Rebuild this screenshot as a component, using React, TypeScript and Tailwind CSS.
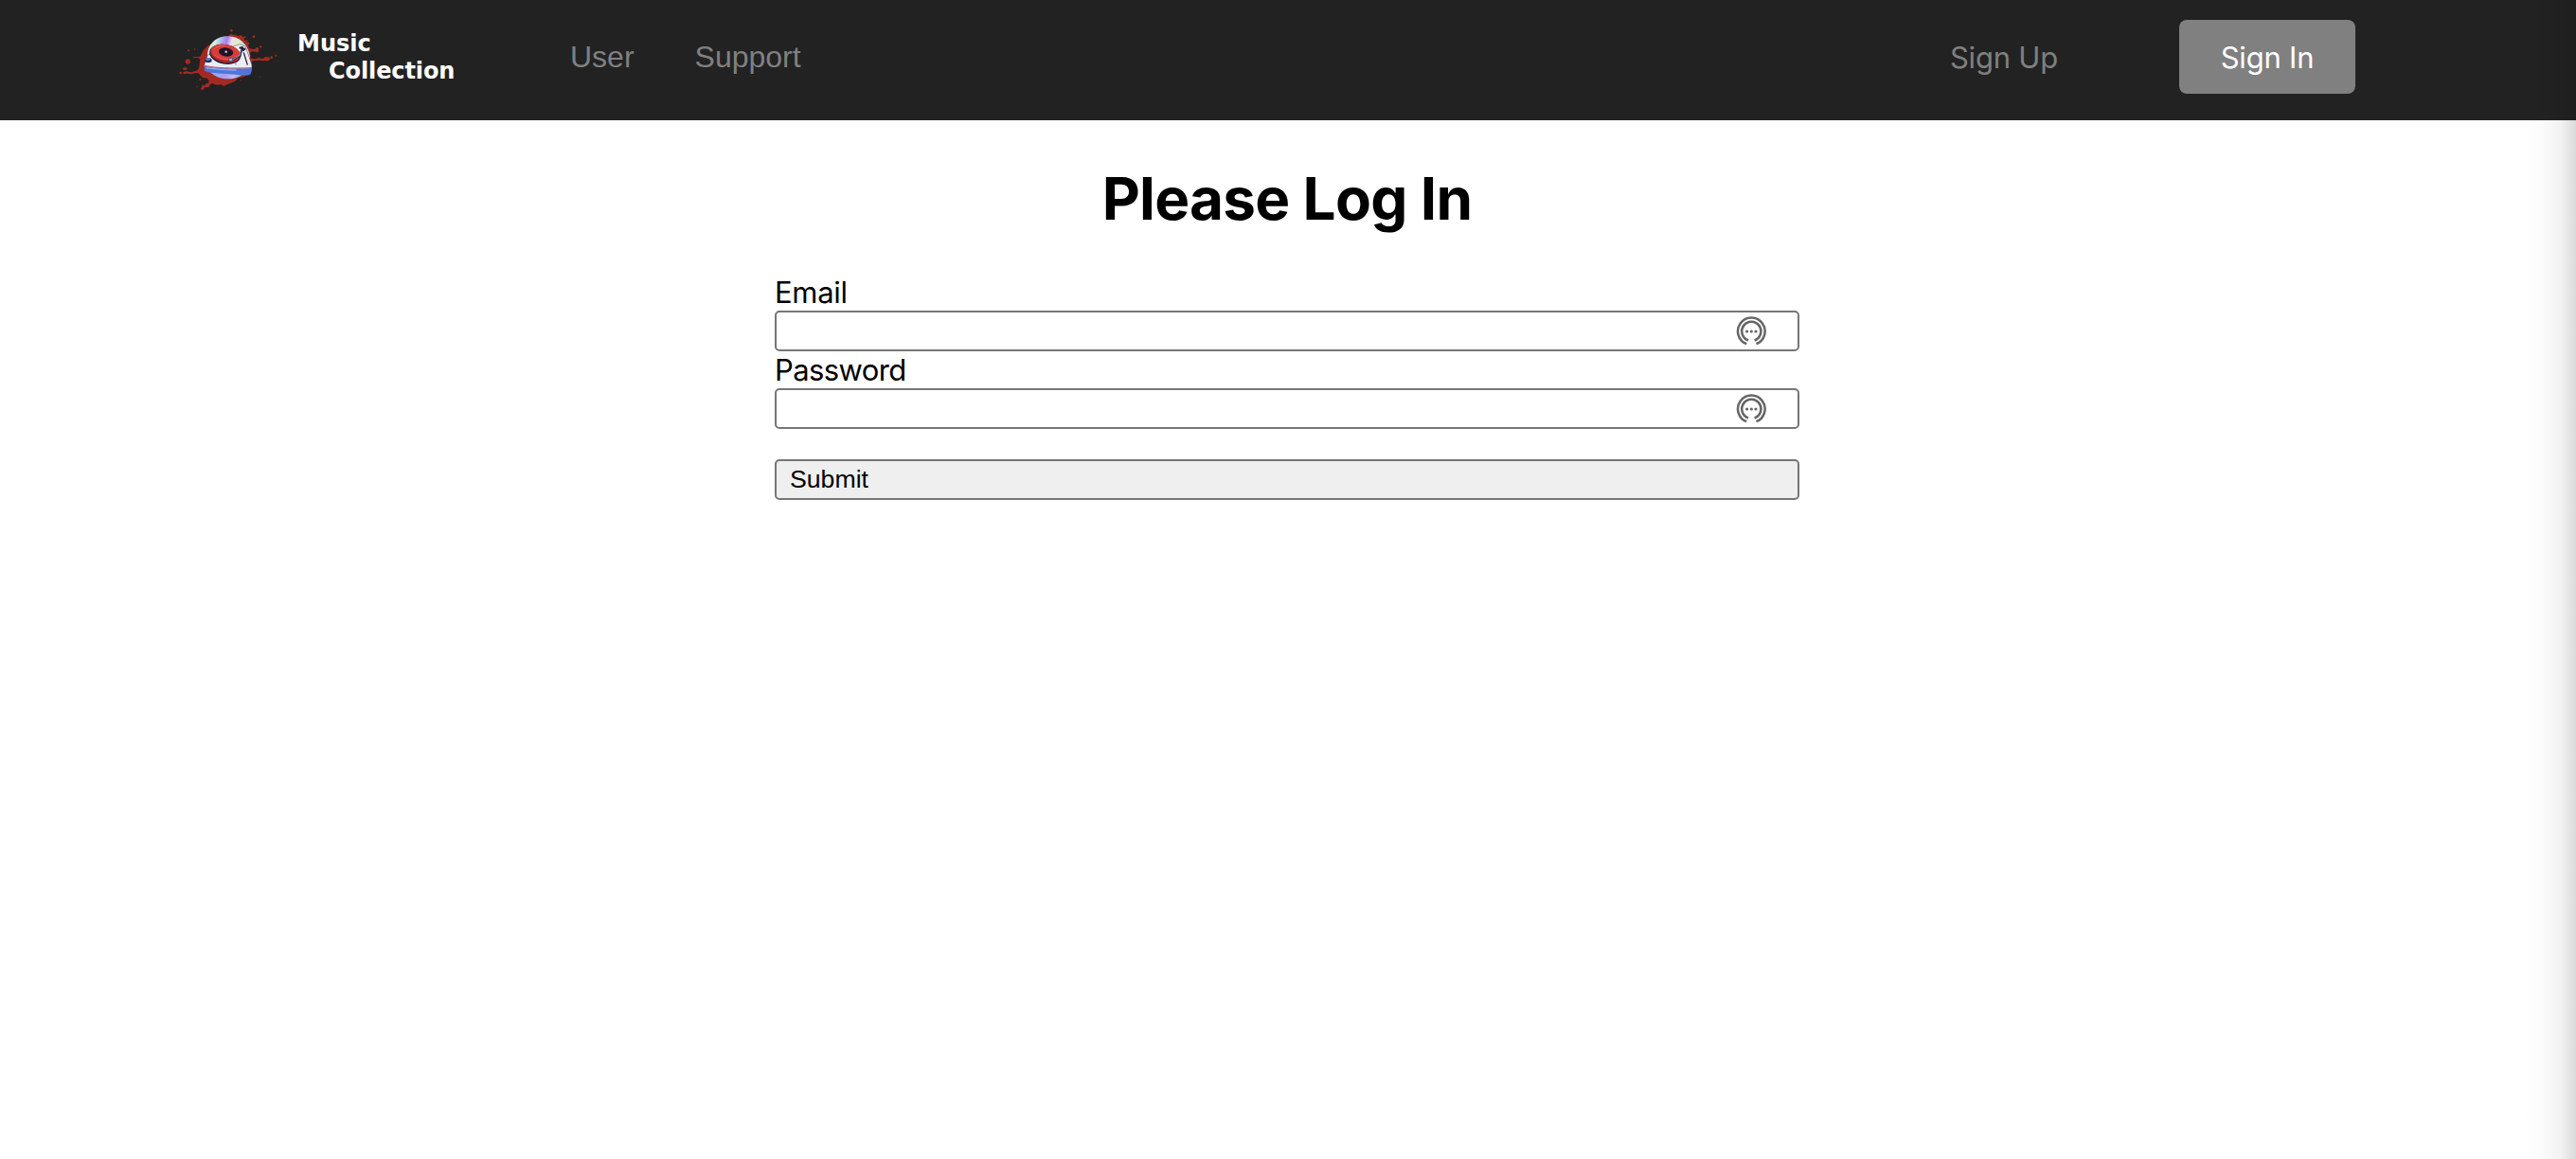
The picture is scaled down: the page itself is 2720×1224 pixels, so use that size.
import React from "react";

function Logo() {
  return (
    <svg width="120" height="80" viewBox="0 0 360 240" className="shrink-0" aria-hidden="true">
      <defs>
        <linearGradient id="disc" x1="0" y1="0.1" x2="1" y2="0.25">
          <stop offset="0" stopColor="#bfe3df" />
          <stop offset="0.2" stopColor="#d6f0dc" />
          <stop offset="0.34" stopColor="#a6b4ea" />
          <stop offset="0.46" stopColor="#a77ce8" />
          <stop offset="0.57" stopColor="#ecdcf4" />
          <stop offset="0.72" stopColor="#dcefc0" />
          <stop offset="0.86" stopColor="#b6e0d0" />
          <stop offset="1" stopColor="#d8dcf0" />
        </linearGradient>
        <linearGradient id="discLow" x1="0" y1="0" x2="1" y2="0">
          <stop offset="0" stopColor="#86b4ee" />
          <stop offset="0.45" stopColor="#a99df0" />
          <stop offset="0.7" stopColor="#b9c3f2" />
          <stop offset="1" stopColor="#6a8fe4" />
        </linearGradient>
      </defs>
      <g fill="#a32a22">
        <path d="M186 52l5-5 8 3 8 0 7 4 10-3 4 6 12-2-7 8 2 7 10-4-3 8 9 0-5 9 3 9 8 3 18 1 6 6-5 4-16-3-9 5 3 8-1 8 12 3 14-3 17 2 8-4 9 5-4 6-15 0-13-2-20 2-8 9 3 12-6 9-2 12-14 8-20 4-10 11-9 4-14 5-12 6-9-5-15 1-12-5-7 4-11 5-8 7-4 6-8-4 4-6 10-6 11-5 2-9-6-8-15-2-12-14-10 0-14 3-14-2-10 2-2-6 11-3 16 3 12-4 9-4 4-9 2-18 1-8-9-3-14 1 0-3 14-1 9-1 9-18 12-13 15-10 17-5z" />
        <circle cx="55" cy="135" r="8" />
        <circle cx="57" cy="100" r="3" />
        <circle cx="77" cy="96" r="2.5" />
        <circle cx="32" cy="171" r="4" />
        <ellipse cx="46" cy="158" rx="7" ry="4" />
        <circle cx="193" cy="37" r="4" />
        <circle cx="264" cy="56" r="4" />
        <circle cx="286" cy="88" r="3.5" />
        <circle cx="274" cy="96" r="6" />
        <ellipse cx="305" cy="126" rx="10" ry="6" />
        <circle cx="320" cy="122" r="4" />
        <circle cx="334" cy="116" r="3" />
        <circle cx="339" cy="133" r="1.5" />
        <circle cx="284" cy="184" r="1.5" />
        <circle cx="223" cy="195" r="2" />
        <circle cx="94" cy="192" r="3" />
        <circle cx="117" cy="210" r="7" />
        <circle cx="103" cy="213" r="4" />
        <circle cx="84" cy="215" r="2" />
      </g>
      <path d="M117 116C118 76 149 54 183 55c38 1 66 28 69 68l-30 10z" fill="url(#disc)" />
      <path d="M122 164c14 16 34 26 58 26 24 0 42-6 56-20z" fill="url(#discLow)" />
      <path d="M118 114l-10 29c-2 6-1 13 1 17 3 6 12 7 22 8l104 7c10 1 16-2 20-9 3-8 4-21 1-26l-18-52-18-8z" fill="#ececf5" stroke="#743344" strokeWidth="1.5" />
      <path d="M108 149c38 8 80 10 149 7 1 9-1 18-6 21-8 3-23 1-38 0l-82-7c-14-1-21-3-23-8z" fill="#4f75dc" />
      <path d="M108 148c40 8 82 9 149 7" stroke="#b73538" strokeWidth="2.5" fill="none" />
      <path d="M113 155c30 5 60 7 96 7" stroke="#88aef3" strokeWidth="4" fill="none" />
      <ellipse cx="173" cy="112" rx="50" ry="31" transform="rotate(10 173 112)" fill="#191a36" />
      <ellipse cx="174" cy="110" rx="48" ry="29" transform="rotate(10 174 110)" fill="#a92830" />
      <ellipse cx="174" cy="106" rx="46" ry="25" transform="rotate(10 174 106)" fill="#d83c35" />
      <path d="M136 98c5-9 22-15 38-13M139 113c13 13 37 18 55 12" stroke="#ee6755" strokeWidth="2.5" fill="none" />
      <ellipse cx="176" cy="105" rx="23" ry="14" transform="rotate(8 176 105)" fill="#211429" />
      <circle cx="176" cy="104" r="3.5" fill="#e6d7df" />
      <ellipse cx="120" cy="131" rx="11" ry="7" fill="#20294d" />
      <ellipse cx="119" cy="128" rx="8" ry="4" fill="#5483d4" />
      <path d="M218 91l20 5M226 87l6 15" stroke="#20203d" strokeWidth="6" />
      <path d="M226 96l-5 22-27 12" stroke="#22213b" strokeWidth="5" fill="none" strokeLinejoin="round" />
      <path d="M222 108l-4 9-24 13" stroke="#b9c6ec" strokeWidth="2" fill="none" />
      <path d="M184 126l10-3 4 8-10 5z" fill="#88b5ed" stroke="#20213d" strokeWidth="1.5" />
      <path d="M232 106l12 40" stroke="#29253d" strokeWidth="4" />
      <circle cx="207" cy="143" r="2" fill="#4b435f" />
    </svg>
  );
}

function VaultIcon() {
  return (
    <svg width="32" height="32" viewBox="0 0 32 32" fill="none" stroke="#666" strokeWidth="2.5" className="shrink-0 -translate-y-px" aria-hidden="true">
      <path d="M11.2 30.2A14.3 14.3 0 1 1 21.4 30.2" />
      <path d="M13 26.4A10.1 10.1 0 1 1 19.6 26.4" strokeWidth="2.6" />
      <g fill="#666" stroke="none">
        <circle cx="11.6" cy="17" r="1.6" />
        <circle cx="16.3" cy="17" r="1.6" />
        <circle cx="21" cy="17" r="1.6" />
      </g>
    </svg>
  );
}

function Field({ label, type, spacing }: { label: string; type: string; spacing: string }) {
  return (
    <label className="block h-[82px]">
      <span className={`block h-[39px] pt-px text-[31px] leading-[37px] ${spacing}`}>{label}</span>
      <span className="flex h-[43px] items-center rounded-[5px] border-2 border-[#767676] bg-white pr-[33px]">
        <input type={type} className="h-full min-w-0 flex-1 px-3 text-[26px] outline-none" />
        <VaultIcon />
      </span>
    </label>
  );
}

export default function App() {
  return (
    <div className="relative h-[1224px] w-[2720px] overflow-hidden bg-white font-['Inter',sans-serif] text-black">
      <header className="flex h-[127px] items-start bg-[#222] pl-[180px] pr-[233px]">
        <a href="#" className="flex w-[422px] pt-5">
          <Logo />
          <span className="ml-[14px] mt-3 font-['DejaVu_Sans',sans-serif] text-[24px] font-bold leading-[29px] text-white">
            <span className="block">Music</span>
            <span className="block pl-[33px] tracking-[-0.1px]">Collection</span>
          </span>
        </a>
        <nav className="flex gap-16 pt-[42px] font-['Liberation_Sans',sans-serif] text-[32px] leading-[36px] text-[#808080]">
          <a href="#">User</a>
          <a href="#">Support</a>
        </nav>
        <div className="ml-auto flex items-start pt-[21px] text-[31px] leading-[80px]">
          <a href="#" className="mr-[128px] tracking-[-0.2px] text-[#808080]">Sign Up</a>
          <a href="#" className="h-[78px] w-[186px] rounded-lg bg-[#808080] text-center tracking-[-0.2px] text-white">Sign In</a>
        </div>
      </header>
      <main className="mx-auto w-[1082px] pt-[47px] -translate-x-px">
        <h1 className="h-[115px] text-center text-[62px] font-bold leading-[72px] tracking-[-0.7px]">Please Log In</h1>
        <form>
          <Field label="Email" type="email" spacing="tracking-[-0.3px]" />
          <Field label="Password" type="password" spacing="tracking-[-0.6px]" />
          <button type="button" className="mt-8 block h-[43px] w-full rounded-[5px] border-2 border-[#767676] bg-[#efefef] pl-[14px] text-left font-['Liberation_Sans',sans-serif] text-[26.67px] leading-[36px]">
            <span className="block -mt-[2px]">Submit</span>
          </button>
        </form>
      </main>
      <div className="pointer-events-none absolute inset-y-0 right-0 w-[56px] bg-[linear-gradient(to_right,transparent,rgba(0,0,0,0.015)_35%,rgba(0,0,0,0.05)_70%,rgba(0,0,0,0.14))]" />
    </div>
  );
}
